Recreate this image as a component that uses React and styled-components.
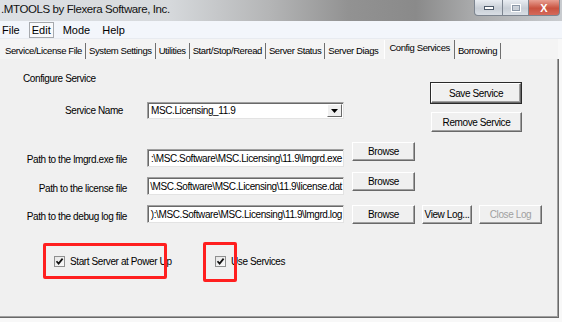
import styled, { createGlobalStyle } from "styled-components";

const GlobalStyle = createGlobalStyle`
  html, body {
    margin: 0;
    padding: 0;
    background: #f8f8f8;
  }
  body {
    font-family: "Liberation Sans", Arial, sans-serif;
  }
`;

const Window = styled.div`
  width: 562px;
  height: 322px;
  display: flex;
  flex-direction: column;
  overflow: hidden;
  background: #f8f8f8;
`;

const TitleBar = styled.div`
  height: 21px;
  display: flex;
  align-items: flex-start;
  background: linear-gradient(
    to right,
    #dde0e4 0%,
    #d6d9dc 30%,
    #b4b5b6 48%,
    #929292 62%,
    #8a8a8a 74%,
    #a9aaab 84%,
    #c9ccd0 100%
  );
`;

const Title = styled.div`
  flex: 1;
  padding: 3px 0 0 1px;
  font-size: 11.5px;
  letter-spacing: -0.4px;
  color: #111;
`;

const Controls = styled.div`
  display: flex;
  margin-right: 2px;
`;

const Ctrl = styled.div`
  width: ${(p) => p.$w}px;
  height: 15px;
  display: flex;
  align-items: center;
  justify-content: center;
  border: 1px solid #7d8590;
  border-top: none;
  margin-left: -1px;
  background: ${(p) =>
    p.$close
      ? "linear-gradient(#e8a093, #c9523f 55%, #d5695a)"
      : "linear-gradient(#e9edf2, #c8ced6 55%, #d9dee4)"};
  border-radius: ${(p) => p.$radius || "0"};
  color: #fff;
  font-size: 11px;
  font-weight: bold;
`;

const MenuBar = styled.div`
  height: 17px;
  display: flex;
  align-items: center;
  background: #f3f6fb;
  border-bottom: 1px solid #e8ebf0;
`;

const MenuItem = styled.div`
  padding: 1px 2px;
  margin-right: 6px;
  font-size: 11px;
  color: #000;
  border: 1px solid ${(p) => (p.$active ? "#a6a9ad" : "transparent")};
  background: ${(p) => (p.$active ? "#f9fafc" : "transparent")};
  &:first-child {
    margin-left: -1px;
  }
`;

const TabStrip = styled.div`
  height: 20px;
  display: flex;
  align-items: flex-end;
  padding-left: 2px;
  background: #f4f4f4;
  margin-right: 4px;
`;

const Tab = styled.div`
  height: ${(p) => (p.$selected ? 19 : 16)}px;
  padding: ${(p) => (p.$selected ? "2px 4px 0 4px" : "2px 3px 0 3px")};
  font-size: 9.5px;
  letter-spacing: -0.4px;
  color: #000;
  white-space: nowrap;
  border-right: 1px solid ${(p) => (p.$plain ? "transparent" : "#6f6f6f")};
  border-left: ${(p) => (p.$selected ? "1px solid #fff" : "none")};
  background: ${(p) => (p.$selected ? "#f0f0f0" : "transparent")};
  margin-left: ${(p) => (p.$selected ? "2px" : "0")};
  box-sizing: border-box;
`;

const Panel = styled.div`
  flex: 1;
  margin: 0 3px 4px 0;
  background: #f0f0f0;
  border-right: 1px solid #696969;
  border-bottom: 1px solid #696969;
  box-shadow: inset -1px -1px 0 #a0a0a0;
  padding-top: 14px;
  display: flex;
  flex-direction: column;
  font-size: 10px;
  letter-spacing: -0.4px;
  color: #000;
`;

const TopSection = styled.div`
  display: flex;
  align-items: flex-start;
`;

const LeftCol = styled.div`
  width: 431px;
  display: flex;
  flex-direction: column;
`;

const Heading = styled.div`
  height: 12px;
  line-height: 12px;
  padding-left: 23px;
`;

const RightCol = styled.div`
  margin-top: 10px;
  display: flex;
  flex-direction: column;
  gap: 9px;
`;

const Row = styled.div`
  display: flex;
  height: ${(p) => p.$h}px;
  margin-top: ${(p) => p.$mt}px;
`;

const Field = styled.div`
  display: flex;
  align-items: center;
  align-self: ${(p) => p.$align || "flex-end"};
`;

const Label = styled.div`
  width: ${(p) => 127 - (p.$pr || 0)}px;
  padding-right: ${(p) => p.$pr || 0}px;
  text-align: right;
  white-space: nowrap;
  margin-top: ${(p) => p.$drop || 0}px;
`;

const Input = styled.div`
  width: 197px;
  height: 18px;
  box-sizing: border-box;
  margin-left: 20px;
  background: #fff;
  border-top: 1px solid #a0a0a0;
  border-left: 1px solid #a0a0a0;
  border-right: 1px solid #e3e3e3;
  border-bottom: 1px solid #e3e3e3;
  box-shadow: inset 1px 1px 0 #696969;
  display: flex;
  align-items: center;
  justify-content: flex-end;
  overflow: hidden;
  white-space: nowrap;
  padding-right: 1px;
`;

const Select = styled.div`
  width: 197px;
  height: 17px;
  box-sizing: border-box;
  margin-left: 20px;
  background: #fff;
  border-top: 1px solid #a0a0a0;
  border-left: 1px solid #a0a0a0;
  border-right: 1px solid #e3e3e3;
  border-bottom: 1px solid #e3e3e3;
  box-shadow: inset 1px 1px 0 #696969;
  display: flex;
  align-items: center;
  padding-left: 3px;
`;

const SelectText = styled.span`
  flex: 1;
`;

const Arrow = styled.div`
  width: 15px;
  height: 13px;
  margin-right: 1px;
  background: #f0f0f0;
  border-top: 1px solid #fff;
  border-left: 1px solid #fff;
  border-right: 1px solid #696969;
  border-bottom: 1px solid #696969;
  box-sizing: border-box;
  display: flex;
  align-items: center;
  justify-content: center;
`;

const Button = styled.div`
  width: ${(p) => p.$w}px;
  height: ${(p) => p.$h || 19}px;
  box-sizing: border-box;
  margin-left: ${(p) => p.$ml || 0}px;
  align-self: flex-start;
  background: #f0f0f0;
  border-top: 1px solid #fff;
  border-left: 1px solid #fff;
  border-right: 1px solid #696969;
  border-bottom: 1px solid #696969;
  box-shadow: inset -1px -1px 0 #a0a0a0
    ${(p) => (p.$default ? ", 0 0 0 1px #2a2a2a" : "")};
  display: flex;
  align-items: center;
  justify-content: center;
  white-space: nowrap;
  color: ${(p) => (p.$disabled ? "#a0a0a0" : "#000")};
`;

const CheckRow = styled.div`
  display: grid;
  grid-template-columns: 161px auto;
  margin-top: 31px;
  padding-left: 54px;
`;

const CheckItem = styled.div`
  position: relative;
  display: flex;
  align-items: center;
  gap: 5px;
  height: 12px;
`;

const Box = styled.div`
  width: 11px;
  height: 11px;
  box-sizing: border-box;
  border: 1px solid #8e8f8f;
  background: linear-gradient(135deg, #e6e6e6, #fafafa);
  display: flex;
  align-items: center;
  justify-content: center;
`;

const Mark = styled.div`
  position: absolute;
  left: ${(p) => p.$l}px;
  top: ${(p) => p.$t}px;
  width: ${(p) => p.$w}px;
  height: ${(p) => p.$h}px;
  box-sizing: border-box;
  border: 3px solid #ff1f1f;
  border-radius: 2px;
  pointer-events: none;
`;

const Check = () => (
  <svg width="9" height="9" viewBox="0 0 9 9">
    <path d="M1.5 4.2 L3.6 6.6 L7.6 1.6" fill="none" stroke="#111" strokeWidth="1.7" />
  </svg>
);

const tabs = [
  "Service/License File",
  "System Settings",
  "Utilities",
  "Start/Stop/Reread",
  "Server Status",
  "Server Diags",
];

const App = () => {
  return (
    <>
      <GlobalStyle />
      <Window>
        <TitleBar>
          <Title>.MTOOLS by Flexera Software, Inc.</Title>
          <Controls>
            <Ctrl $w={27} $radius="0 0 0 4px">
              <svg width="10" height="4" viewBox="0 0 10 4">
                <rect x="0.5" y="0.5" width="9" height="3" fill="#fff" stroke="#4d5a6a" />
              </svg>
            </Ctrl>
            <Ctrl $w={25}>
              <svg width="10" height="8" viewBox="0 0 10 8">
                <rect x="0.5" y="0.5" width="9" height="7" fill="none" stroke="#fff" />
                <rect x="1.5" y="1.5" width="7" height="5" fill="none" stroke="#8b97a6" />
              </svg>
            </Ctrl>
            <Ctrl $w={30} $close $radius="0 0 4px 0">X</Ctrl>
          </Controls>
        </TitleBar>
        <MenuBar>
          <MenuItem>File</MenuItem>
          <MenuItem $active>Edit</MenuItem>
          <MenuItem>Mode</MenuItem>
          <MenuItem>Help</MenuItem>
        </MenuBar>
        <TabStrip>
          {tabs.map((t, i) => (
            <Tab key={t} $plain={i === tabs.length - 1}>
              {t}
            </Tab>
          ))}
          <Tab $selected>Config Services</Tab>
          <Tab>Borrowing</Tab>
        </TabStrip>
        <Panel>
          <TopSection>
            <LeftCol>
              <Heading>Configure Service</Heading>
              <Row $h={17} $mt={17}>
                <Field $align="center">
                  <Label $pr={4}>Service Name</Label>
                  <Select>
                    <SelectText>MSC.Licensing_11.9</SelectText>
                    <Arrow>
                      <svg width="7" height="4" viewBox="0 0 7 4">
                        <path d="M0 0 H7 L3.5 4 Z" fill="#000" />
                      </svg>
                    </Arrow>
                  </Select>
                </Field>
              </Row>
            </LeftCol>
            <RightCol>
              <Button $w={90} $h={20} $default>
                Save Service
              </Button>
              <Button $w={91} $h={20}>
                Remove Service
              </Button>
            </RightCol>
          </TopSection>

          <Row $h={25} $mt={10}>
            <Field>
              <Label $drop={2}>Path to the lmgrd.exe file</Label>
              <Input>:\MSC.Software\MSC.Licensing\11.9\lmgrd.exe</Input>
            </Field>
            <Button $w={63} $ml={8}>
              Browse
            </Button>
          </Row>

          <Row $h={23} $mt={5}>
            <Field>
              <Label $drop={4}>Path to the license file</Label>
              <Input>\MSC.Software\MSC.Licensing\11.9\license.dat</Input>
            </Field>
            <Button $w={63} $ml={8}>
              Browse
            </Button>
          </Row>

          <Row $h={19} $mt={10}>
            <Field $align="flex-start">
              <Label $drop={4}>Path to the debug log file</Label>
              <Input>):\MSC.Software\MSC.Licensing\11.9\lmgrd.log</Input>
            </Field>
            <Button $w={63} $ml={8}>
              Browse
            </Button>
            <Button $w={50} $ml={7}>
              View Log...
            </Button>
            <Button $w={63} $ml={7} $disabled>
              Close Log
            </Button>
          </Row>

          <CheckRow>
            <CheckItem>
              <Box>
                <Check />
              </Box>
              <span>Start Server at Power Up</span>
              <Mark $l={-11} $t={-12} $w={124} $h={36} />
            </CheckItem>
            <CheckItem>
              <Box>
                <Check />
              </Box>
              <span>Use Services</span>
              <Mark $l={-12} $t={-13} $w={34} $h={40} />
            </CheckItem>
          </CheckRow>
        </Panel>
      </Window>
    </>
  );
};

export default App;
